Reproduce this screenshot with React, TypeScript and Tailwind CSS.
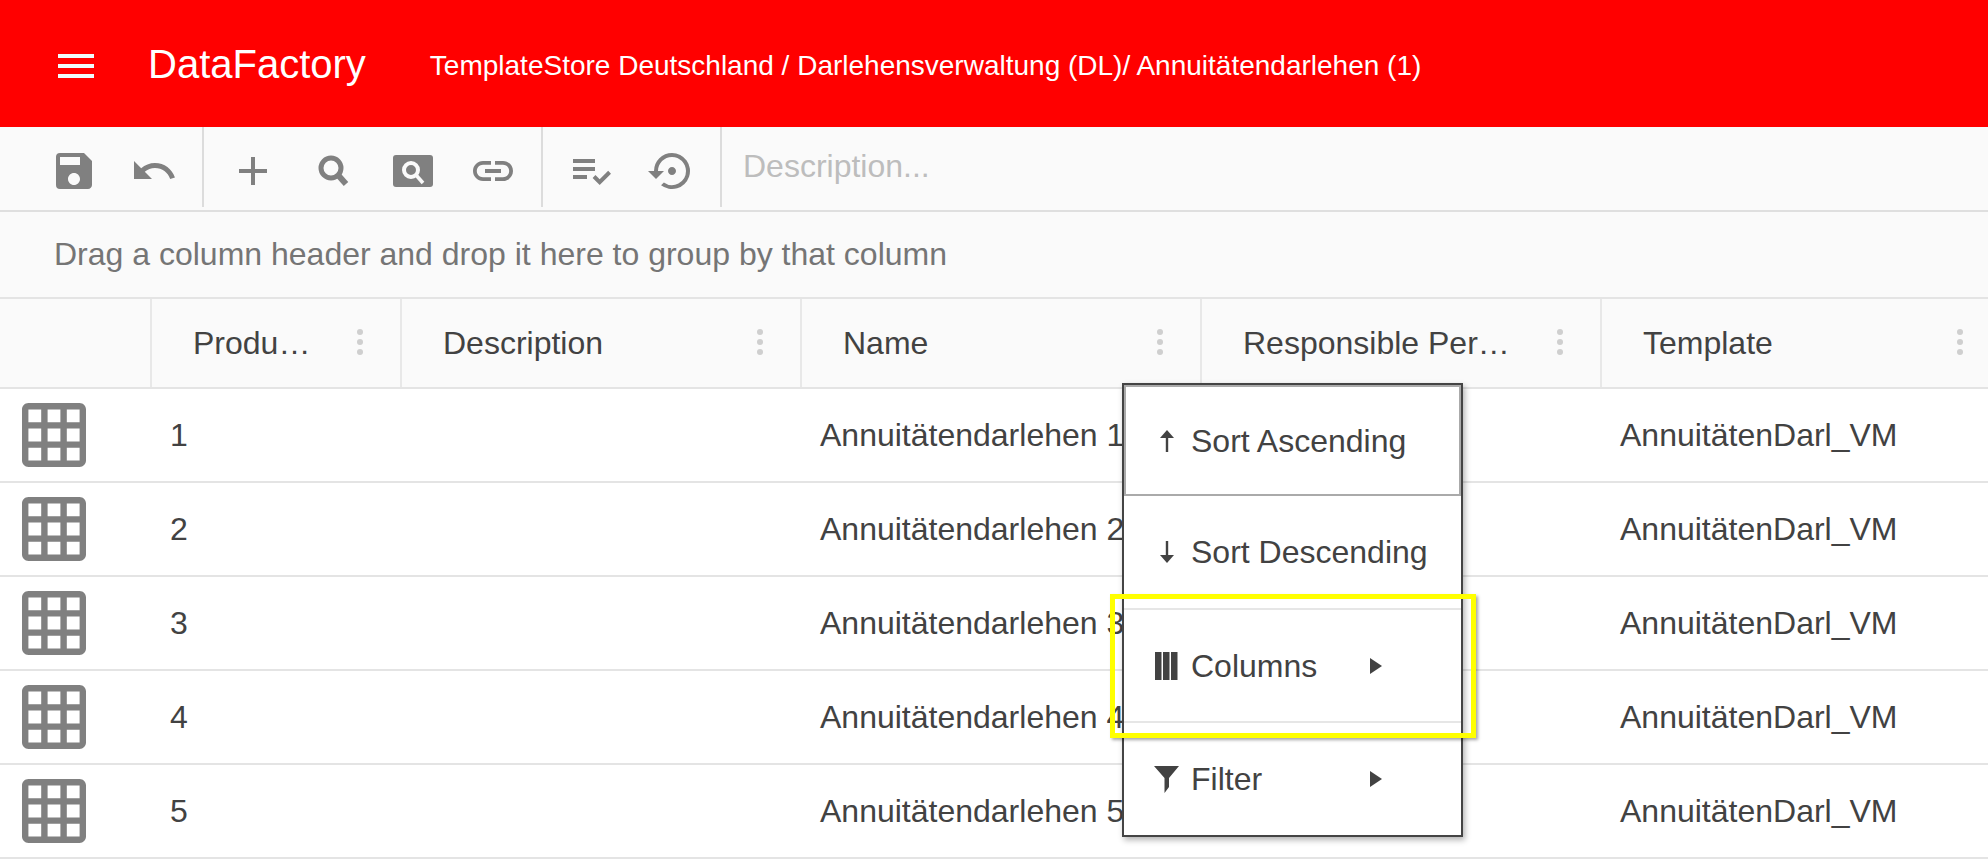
import React from "react";
import { MdSave, MdUndo, MdAdd, MdLink, MdPlaylistAddCheck, MdSettingsBackupRestore } from "react-icons/md";

const font = "font-['Liberation_Sans',Arial,sans-serif]";

function ToolIcon({ children }: { children: React.ReactNode }) {
  return <div className="flex h-[80px] w-[80px] items-center justify-center pt-[8px] text-[#808080]">{children}</div>;
}

function SearchIcon() {
  return (
    <svg width="32" height="32" viewBox="0 0 32 32" fill="none" stroke="#808080">
      <circle cx="13" cy="13" r="10" strokeWidth="5" />
      <path d="M20 20 L28 29" strokeWidth="6" />
    </svg>
  );
}

function FindBox() {
  return (
    <svg width="40" height="32" viewBox="0 0 40 32" fill="none">
      <rect width="40" height="32" rx="3" fill="#808080" />
      <circle cx="18" cy="15" r="7" stroke="#fafafa" strokeWidth="4" />
      <path d="M23 20 L30 28" stroke="#fafafa" strokeWidth="3.5" />
    </svg>
  );
}

function GridIcon() {
  return (
    <svg width="64" height="64" viewBox="2 2 20 20" fill="#808080">
      <path d="M20 2H4c-1.1 0-2 .9-2 2v16c0 1.1.9 2 2 2h16c1.1 0 2-.9 2-2V4c0-1.100-.9-2-2-2zM8 20H4v-4h4v4zm0-6H4v-4h4v4zm0-6H4V4h4v4zm6 12h-4v-4h4v4zm0-6h-4v-4h4v4zm0-6h-4V4h4v4zm6 12h-4v-4h4v4zm0-6h-4v-4h4v4zm0-6h-4V4h4v4z" />
    </svg>
  );
}

function Kebab() {
  return (
    <div className="flex flex-col gap-[4px]">
      <span className="h-[6px] w-[6px] rounded-full bg-[#cfcfcf]" />
      <span className="h-[6px] w-[6px] rounded-full bg-[#cfcfcf]" />
      <span className="h-[6px] w-[6px] rounded-full bg-[#cfcfcf]" />
    </div>
  );
}

const columns = [
  { w: "w-[250px]", label: "Produ…" },
  { w: "w-[400px]", label: "Description" },
  { w: "w-[400px]", label: "Name" },
  { w: "w-[400px]", label: "Responsible Per…" },
  { w: "w-[400px]", label: "Template" },
];

const rows = [1, 2, 3, 4, 5];

function ArrowUp() {
  return (
    <svg width="14" height="22" viewBox="0 0 14 22" fill="#424242">
      <path d="M7 0 L14 8 H8.200 V22 H5.800 V8 H0 Z" />
    </svg>
  );
}

function ArrowDown() {
  return (
    <svg width="14" height="22" viewBox="0 0 14 22" fill="#424242">
      <path d="M7 22 L14 14 H8.200 V0 H5.800 V14 H0 Z" />
    </svg>
  );
}

function ColumnsIcon() {
  return (
    <svg width="23" height="28" viewBox="0 0 23 28" fill="#424242">
      <rect x="0" width="6.500" height="28" />
      <rect x="8" width="6.500" height="28" />
      <rect x="16" width="6.500" height="28" />
    </svg>
  );
}

function FilterIcon() {
  return (
    <svg width="25" height="27" viewBox="0 0 25 27" fill="#424242">
      <path d="M0 0 H25 L15 12 V21 L10.500 27 V12 Z" />
    </svg>
  );
}

function Tri() {
  return (
    <svg width="12" height="16" viewBox="0 0 12 16" fill="#424242">
      <path d="M0 0 L12 8 L0 16 Z" />
    </svg>
  );
}

function MenuItem({ icon, label, arrow, className }: { icon: React.ReactNode; label: string; arrow?: boolean; className: string }) {
  return (
    <div className={`flex items-center ${className}`}>
      <div className="flex w-[25px] justify-center">{icon}</div>
      <span className="ml-[12px] w-[179px] whitespace-nowrap">{label}</span>
      {arrow && <Tri />}
    </div>
  );
}

export default function App() {
  return (
    <div className={`relative h-[866px] w-[1988px] overflow-hidden bg-white text-[32px] text-[#424242] ${font}`}>
      <header className="flex h-[127px] items-center bg-[#ff0000] text-white">
        <div className="ml-[58px] flex w-[36px] flex-col gap-[6px] pt-[5px]">
          <span className="h-[4px] bg-[#f0fafa]" />
          <span className="h-[4px] bg-[#f0fafa]" />
          <span className="h-[4px] bg-[#f0fafa]" />
        </div>
        <div className="ml-[54px] text-[40px] leading-none">DataFactory</div>
        <div className="ml-[64px] pt-[4px] text-[28px] leading-none">TemplateStore Deutschland / Darlehensverwaltung (DL)/ Annuitätendarlehen (1)</div>
      </header>

      <div className="flex h-[85px] items-start border-b-2 border-[#dfdfdf] bg-[#fafafa] pl-[34px]">
        <div className="flex h-[80px] border-r-2 border-[#dcdcdc] pr-[8px]">
          <ToolIcon><MdSave size={48} /></ToolIcon>
          <ToolIcon><MdUndo size={48} /></ToolIcon>
        </div>
        <div className="ml-[9px] flex h-[80px] border-r-2 border-[#dcdcdc] pr-[8px]">
          <ToolIcon><MdAdd size={48} /></ToolIcon>
          <div className="ml-px"><ToolIcon><SearchIcon /></ToolIcon></div>
          <div className="-ml-px"><ToolIcon><FindBox /></ToolIcon></div>
          <ToolIcon><MdLink size={48} /></ToolIcon>
        </div>
        <div className="ml-[8px] flex h-[80px] border-r-2 border-[#dcdcdc] pr-[8px]">
          <ToolIcon><MdPlaylistAddCheck size={48} /></ToolIcon>
          <div className="ml-px"><ToolIcon><MdSettingsBackupRestore size={48} /></ToolIcon></div>
        </div>
        <div className="ml-[21px] flex h-[80px] items-center pb-[3px] text-[#bdbdbd]">Description...</div>
      </div>

      <div className="flex h-[87px] items-center border-b-2 border-[#e4e4e4] bg-[#fafafa] pb-[2px] pl-[54px] text-[#757575]">
        Drag a column header and drop it here to group by that column
      </div>

      <div className="flex h-[90px] border-b-2 border-[#e4e4e4] bg-[#fafafa]">
        <div className="w-[152px] shrink-0 border-r-2 border-[#e8e8e8]" />
        {columns.map((c) => (
          <div key={c.label} className={`relative flex ${c.w} shrink-0 items-center border-r-2 border-[#e8e8e8] pl-[41px]`}>
            <span className="whitespace-nowrap">{c.label}</span>
            <div className="absolute right-[37px] top-[30px]"><Kebab /></div>
          </div>
        ))}
      </div>

      {rows.map((r) => (
        <div key={r} className="flex h-[94px] items-center border-b-2 border-[#e4e4e4]">
          <div className="flex w-[152px] shrink-0 pl-[22px]"><GridIcon /></div>
          <div className="w-[250px] shrink-0 pl-[18px]">{r}</div>
          <div className="w-[400px] shrink-0" />
          <div className="w-[400px] shrink-0 pl-[18px] whitespace-nowrap">Annuitätendarlehen {r}</div>
          <div className="w-[400px] shrink-0" />
          <div className="w-[400px] shrink-0 pl-[18px] whitespace-nowrap">AnnuitätenDarl_VM</div>
        </div>
      ))}

      <div className="absolute left-[1122px] top-[383px] flex h-[454px] w-[341px] flex-col border-2 border-[#444444] bg-white shadow-[2px_3px_6px_rgba(0,0,0,0.3)]">
        <MenuItem className="h-[111px] border-2 border-[#aaaaaa] pl-[28px]" icon={<ArrowUp />} label="Sort Ascending" />
        <MenuItem className="h-[114px] border-b-2 border-[#e6e6e6] pl-[30px]" icon={<ArrowDown />} label="Sort Descending" />
        <MenuItem className="h-[113px] border-b-2 border-[#e6e6e6] pl-[30px]" icon={<ColumnsIcon />} label="Columns" arrow />
        <MenuItem className="h-[112px] pl-[30px]" icon={<FilterIcon />} label="Filter" arrow />
      </div>

      <div className="absolute left-[1110px] top-[594px] h-[144px] w-[366px] border-[5px] border-[#ffff00] shadow-[2px_2px_3px_rgba(0,0,0,0.35)]" />
    </div>
  );
}
